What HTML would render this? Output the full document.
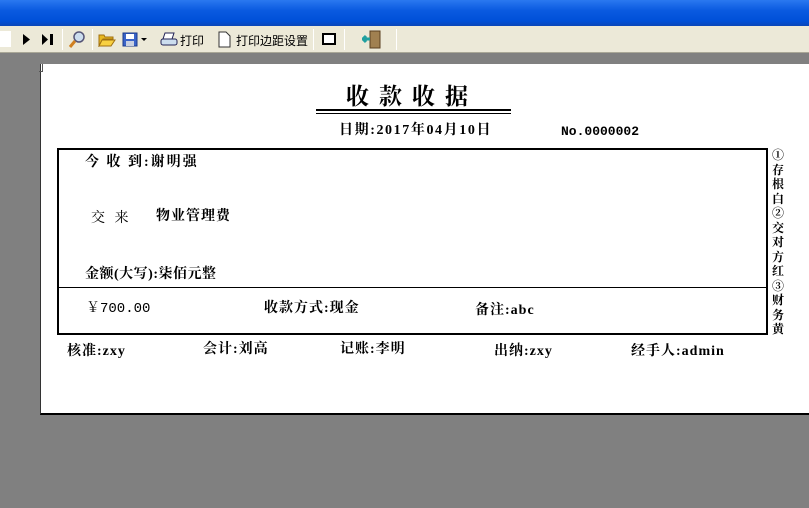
<!DOCTYPE html>
<html><head><meta charset="utf-8"><style>
*{margin:0;padding:0;box-sizing:border-box}
body{width:809px;height:508px;background:#808080;position:relative;overflow:hidden;font-family:"Liberation Serif","Noto Serif CJK SC","WenQuanYi Zen Hei",serif;color:#000}
.t{position:absolute;white-space:nowrap;font-size:14px;font-weight:bold;line-height:1;letter-spacing:1px}
#title{position:absolute;left:0;top:0;width:809px;height:26px;background:linear-gradient(#2a78f0,#0a5ae0 40%,#0050d8 80%,#0a46b8)}
#tb{position:absolute;left:0;top:26px;width:809px;height:27px;background:#ece9d8;border-bottom:1px solid #a9a797;font-family:"Liberation Sans","Noto Sans CJK SC",sans-serif;font-size:12px}
#tb span{position:absolute;top:6px;white-space:nowrap}
.sep{position:absolute;top:3px;width:1px;height:21px;background:#c5c2b2;border-right:1px solid #fff}
#paper{position:absolute;left:40px;top:64px;width:769px;height:351px;background:#fff;border-left:1px solid #333;border-bottom:2px solid #000}
.m{font-family:"Liberation Mono","Noto Serif CJK SC",monospace;letter-spacing:0}
</style></head><body>
<div id="title"></div>
<div id="tb">
<div style="position:absolute;left:0;top:5px;width:11px;height:16px;background:#fff"></div>
<svg style="position:absolute;left:22px;top:8px" width="10" height="11"><path d="M1 0L8 5.5L1 11Z" fill="#000"/></svg>
<svg style="position:absolute;left:41px;top:8px" width="14" height="11"><path d="M1 0L7 5.5L1 11Z" fill="#000"/><rect x="9" y="0" width="3" height="11" fill="#000"/></svg>
<div class="sep" style="left:62px"></div>
<svg style="position:absolute;left:67px;top:4px" width="20" height="20"><circle cx="12" cy="7" r="5" fill="#cde" stroke="#557" stroke-width="1.5"/><path d="M8 11L3 17" stroke="#d08020" stroke-width="3"/></svg>
<div class="sep" style="left:92px"></div>
<svg style="position:absolute;left:98px;top:6px" width="18" height="15"><path d="M1 3h5l1 2h8v2H5L1 14Z" fill="#e8b820" stroke="#a07010"/><path d="M4 8h13l-4 6H1Z" fill="#f8d040" stroke="#a07010"/></svg>
<svg style="position:absolute;left:122px;top:6px" width="16" height="15"><rect x="1" y="1" width="14" height="13" fill="#3a64c8" stroke="#1a3a8a"/><rect x="4" y="2" width="8" height="5" fill="#fff"/><rect x="4" y="9" width="8" height="5" fill="#c8d0e0"/></svg>
<svg style="position:absolute;left:141px;top:12px" width="6" height="4"><path d="M0 0h6L3 3Z" fill="#000"/></svg>
<svg style="position:absolute;left:160px;top:6px" width="18" height="15"><path d="M5 1h9l-2 6H3Z" fill="#fff" stroke="#225"/><rect x="1" y="7" width="16" height="6" rx="2" fill="#cde" stroke="#225"/></svg>
<span style="left:180px">打印</span>
<svg style="position:absolute;left:218px;top:5px" width="13" height="17"><path d="M1 1h7l4 4v11H1Z" fill="#fff" stroke="#333"/></svg>
<span style="left:236px">打印边距设置</span>
<div class="sep" style="left:313px"></div>
<div style="position:absolute;left:322px;top:7px;width:14px;height:12px;border:2px solid #000;background:#fff"></div>
<div class="sep" style="left:344px"></div>
<svg style="position:absolute;left:362px;top:4px" width="20" height="19"><rect x="8" y="1" width="10" height="17" fill="#a08050" stroke="#5a4020"/><path d="M1 9h7M4 6l-3 3 3 3" stroke="#20a0a0" stroke-width="3" fill="none"/></svg>
<div class="sep" style="left:396px"></div>
</div>
<div id="paper"></div>
<div style="position:absolute;left:39px;top:64px;width:4px;height:8px;border:1px solid #555;border-top:none;border-left:none"></div>
<div class="t" style="left:346px;top:85px;font-size:23px;letter-spacing:10px">收款收据</div>
<div style="position:absolute;left:316px;top:109px;width:195px;height:5px;border-top:2px solid #000;border-bottom:1px solid #000"></div>
<div class="t" style="left:339px;top:124px;letter-spacing:1.6px">日期:2017年04月10日</div>
<div class="t m" style="left:561px;top:125px;font-size:13px">No.0000002</div>
<div style="position:absolute;left:57px;top:148px;width:711px;height:187px;border:2px solid #000"></div>
<div style="position:absolute;left:58px;top:287px;width:709px;height:1px;background:#000"></div>
<div class="t" style="left:85px;top:156px;letter-spacing:2px">今 收 到:谢明强</div>
<div class="t" style="left:91px;top:212px;font-weight:normal;letter-spacing:3px">交 来</div>
<div class="t" style="left:156px;top:210px">物业管理费</div>
<div class="t" style="left:85px;top:268px;letter-spacing:0.5px">金额(大写):柒佰元整</div>
<div class="t m" style="left:86px;top:302px;font-weight:normal">￥700.00</div>
<div class="t" style="left:264px;top:302px">收款方式:现金</div>
<div class="t" style="left:475px;top:304px">备注:abc</div>
<div class="t" style="left:67px;top:345px">核准:zxy</div>
<div class="t" style="left:203px;top:343px">会计:刘高</div>
<div class="t" style="left:340px;top:343px">记账:李明</div>
<div class="t" style="left:494px;top:345px">出纳:zxy</div>
<div class="t" style="left:631px;top:345px">经手人:admin</div>
<div class="t" style="left:772px;top:148px;font-size:12px;line-height:14.5px;white-space:normal;width:14px;letter-spacing:0">①存根白②交对方红③财务黄</div>
</body></html>
